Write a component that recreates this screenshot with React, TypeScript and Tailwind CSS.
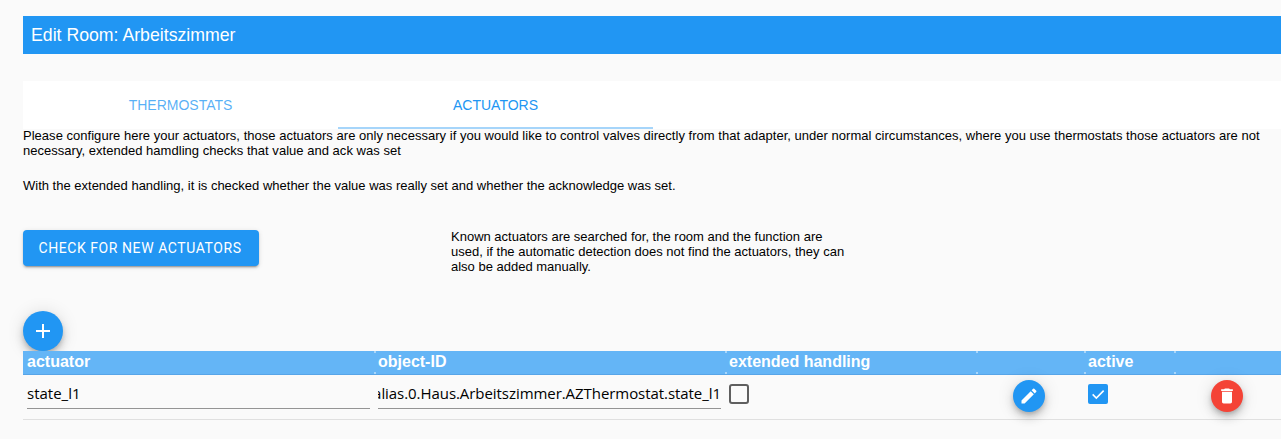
import React from "react";

const cols = "grid grid-cols-[351px_351px_251px_108px_90px_1fr]";

function Fab({ color, children }: { color: string; children: React.ReactNode }) {
  return (
    <span className={`flex w-8 h-8 items-center justify-center rounded-full text-white shadow-[0_3px_5px_-1px_rgba(0,0,0,0.2),0_6px_10px_0_rgba(0,0,0,0.14),0_1px_18px_0_rgba(0,0,0,0.12)] ${color}`}>
      {children}
    </span>
  );
}

function HeadCell({ children, first }: { children?: React.ReactNode; first?: boolean }) {
  return (
    <div className="relative h-[23px] pl-1 text-[16px] leading-[21px] font-bold text-white font-['Liberation_Sans',sans-serif]">
      {!first && (
        <>
          <span className="absolute left-0 top-0 h-[2px] w-[2px] bg-[#a9d6fa]" />
          <span className="absolute bottom-0 left-0 h-[2px] w-[2px] bg-[#a9d6fa]" />
        </>
      )}
      {children}
    </div>
  );
}

export default function App() {
  return (
    <div className="h-[439px] overflow-hidden bg-[#fafafa] pl-[23px] pt-4 font-['Liberation_Sans',Arial,sans-serif] text-[13px] leading-[15px] text-black">
      <div className="flex h-[38px] items-center bg-[#2196f3] pl-2 text-[17.7px] text-white">Edit Room: Arbeitszimmer</div>

      <div className="mt-[27px] flex h-12 bg-white text-[14px]">
        <div className="flex w-[315px] items-center justify-center pt-[1px] text-[#2196f3]/75">THERMOSTATS</div>
        <div className="flex w-[315px] items-center justify-center border-b-2 border-b-[#a6d5fa] pt-[3px] text-[#2196f3]">ACTUATORS</div>
      </div>

      <div className="-mt-px pr-[15px]">
        <p className="tracking-[0.025px]">Please configure here your actuators, those actuators are only necessary if you would like to control valves directly from that adapter, under normal circumstances, where you use thermostats those actuators are not necessary, extended hamdling checks that value and ack was set</p>
        <p className="mt-[20px]">With the extended handling, it is checked whether the value was really set and whether the acknowledge was set.</p>
      </div>

      <div className="mt-[30px] flex items-start">
        <button className="mt-[7px] h-9 w-[236px] rounded-[4px] bg-[#2196f3] pr-[2px] text-[14px] tracking-[0.57px] text-white font-['Roboto',sans-serif] shadow-[0_3px_1px_-2px_rgba(0,0,0,0.2),0_2px_2px_0_rgba(0,0,0,0.14),0_1px_5px_0_rgba(0,0,0,0.12)]">
          CHECK FOR NEW ACTUATORS
        </button>
        <p className="ml-[192px] mt-[6px] w-[400px]">Known actuators are searched for, the room and the function are used, if the automatic detection does not find the actuators, they can also be added manually.</p>
      </div>

      <button className="mt-[37px] flex h-10 w-10 items-center justify-center rounded-full bg-[#2196f3] text-white shadow-[0_3px_5px_-1px_rgba(0,0,0,0.2),0_6px_10px_0_rgba(0,0,0,0.14),0_1px_18px_0_rgba(0,0,0,0.12)]">
        <svg width="24" height="24" viewBox="0 0 24 24" fill="currentColor"><path d="M19 13h-6v6h-2v-6H5v-2h6V5h2v6h6v2z" /></svg>
      </button>

      <div className={`${cols} border-b border-b-[#57a5e8] bg-[#64b5f6]`}>
        <HeadCell first>actuator</HeadCell>
        <HeadCell>object-ID</HeadCell>
        <HeadCell>extended handling</HeadCell>
        <HeadCell />
        <HeadCell>active</HeadCell>
        <HeadCell />
      </div>

      <div className={`${cols} h-[45px] border-b border-b-[#e0e0e0] font-['Open_Sans',sans-serif]`}>
        <div className="pl-1 pr-[4px]">
          <div className="mt-[2px] h-[32px] overflow-hidden border-b border-b-[#949494] text-[15px] leading-[32px]">state_l1</div>
        </div>
        <div className="pl-1 pr-[4px]">
          <div className="mt-[2px] flex h-[32px] justify-end overflow-hidden whitespace-nowrap border-b border-b-[#949494] text-[15px] leading-[32px] tracking-[-0.06px]">alias.0.Haus.Arbeitszimmer.AZThermostat.state_l1</div>
        </div>
        <div className="pl-1 pt-[9px]">
          <div className="h-5 w-5 rounded-[3px] border-[2.5px] border-[#5f5f5f]" />
        </div>
        <div className="flex justify-center pr-[2px] pt-[5px]">
          <Fab color="bg-[#2196f3]">
            <svg width="20" height="20" viewBox="0 0 24 24" fill="currentColor"><path d="M3 17.25V21h3.75L17.81 9.94l-3.75-3.75L3 17.25zM20.71 7.04a1 1 0 0 0 0-1.41l-2.34-2.34a1 1 0 0 0-1.41 0l-1.83 1.83 3.75 3.75 1.83-1.83z" /></svg>
          </Fab>
        </div>
        <div className="pl-1 pt-[9px]">
          <div className="flex h-5 w-5 items-center justify-center rounded-[2px] bg-[#2196f3]">
            <svg width="16" height="16" viewBox="0 0 24 24" fill="none" stroke="white" strokeWidth="2.4"><path d="M4 12.5l5.5 5.5L20.5 7" /></svg>
          </div>
        </div>
        <div className="flex justify-center pr-[2px] pt-[5px]">
          <Fab color="bg-[#f44336]">
            <svg width="20" height="20" viewBox="0 0 24 24" fill="currentColor"><path d="M6 19c0 1.1.9 2 2 2h8c1.1 0 2-.9 2-2V7H6v12zM19 4h-3.5l-1-1h-5l-1 1H5v2h14V4z" /></svg>
          </Fab>
        </div>
      </div>
    </div>
  );
}
